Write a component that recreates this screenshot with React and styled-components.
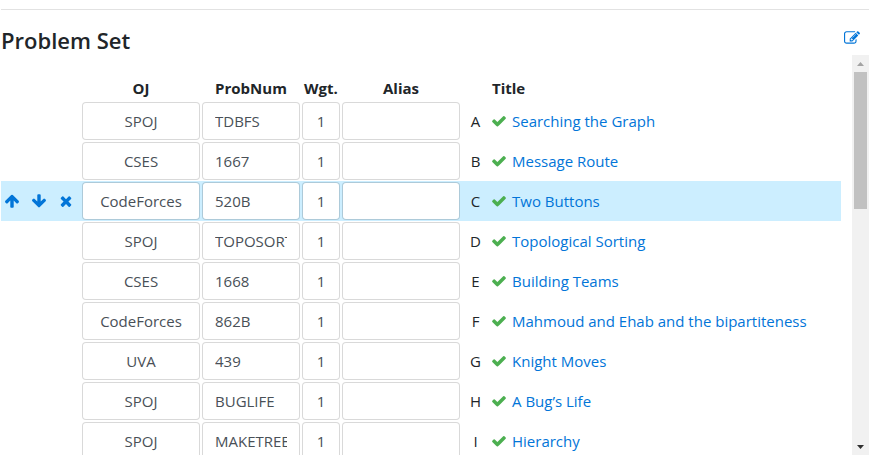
import React from "react";
import styled, { createGlobalStyle } from "styled-components";

const GlobalStyle = createGlobalStyle`
  *, *::before, *::after { box-sizing: border-box; }
  body {
    margin: 0;
    background: #fff;
    color: #212529;
    font: 15px/24px "Open Sans", "Noto Sans", sans-serif;
  }
`;

const Page = styled.main`
  padding: 9px 7px 13px 1px;
`;

const Divider = styled.hr`
  height: 1px;
  margin: 0;
  border: 0;
  background: #e2e2e2;
`;

const Header = styled.header`
  display: flex;
  align-items: center;
  justify-content: space-between;
  height: 45px;
  padding: 14px 9px 0 0;
`;

const Heading = styled.h2`
  margin: 0;
  font-size: 22px;
  font-weight: 600;
  line-height: 28px;
`;

const IconButton = styled.button`
  display: inline-flex;
  padding: 0;
  border: 0;
  background: none;
  color: #0275d8;
  cursor: pointer;
`;

const EditButton = styled(IconButton)`
  margin-bottom: 4px;
`;

const Svg = styled.svg`
  display: block;
  flex: none;
  width: 16px;
  height: 16px;
  fill: currentColor;
`;

const ScrollBox = styled.div`
  display: flex;
  max-height: 400px;
  overflow: hidden;
`;

const Viewport = styled.div`
  flex: 1;
  min-width: 0;
  padding: 13px 11px 0 0;
`;

const Table = styled.table`
  width: 100%;
  table-layout: fixed;
  border-collapse: collapse;
`;

const Col = styled.col`
  width: ${(p) => p.$width};
`;

const Th = styled.th`
  height: 33px;
  padding: 6px 0 0 ${(p) => (p.$align ? "2px" : "0")};
  text-align: ${(p) => p.$align || "center"};
  font-weight: 700;
  white-space: nowrap;
`;

const Row = styled.tr`
  background: ${(p) => (p.$active ? "#cceeff" : "transparent")};
`;

const Td = styled.td`
  height: 40px;
  padding: 1px;
  text-align: center;
`;

const TitleTd = styled(Td)`
  text-align: left;
`;

const Actions = styled.div`
  display: flex;
  align-items: center;
  gap: 11px;
  padding-left: 2px;
`;

const Control = styled.input`
  display: block;
  width: 100%;
  height: 38px;
  padding: 0 ${(p) => p.$pad || "12px"};
  border: 1px solid rgba(0, 0, 0, 0.15);
  border-radius: 4px;
  background: #fff;
  background-clip: padding-box;
  color: #495057;
  font: inherit;
  text-align: ${(p) => p.$align || "left"};
`;

const Judge = styled(Control)`
  appearance: none;
  text-align: center;
  text-align-last: center;
`;

const TitleCell = styled.div`
  display: flex;
  align-items: center;
  gap: 5px;
`;

const Solved = styled.span`
  color: #4caf50;
`;

const Link = styled.a`
  color: #0275d8;
  text-decoration: none;
  white-space: nowrap;
`;

const Scrollbar = styled.div`
  display: flex;
  flex: none;
  flex-direction: column;
  width: 17px;
  height: 400px;
  background: #f1f1f1;
`;

const Step = styled(IconButton)`
  align-items: center;
  justify-content: center;
  height: 17px;
  color: ${(p) => (p.$dim ? "#a3a3a3" : "#303030")};
`;

const Arrow = styled.svg`
  width: 7px;
  height: 4px;
  fill: currentColor;
`;

const Track = styled.div`
  flex: 1;
  padding: 0 2px;
`;

const Thumb = styled.div`
  height: 137px;
  background: #c1c1c1;
`;

const paths = {
  up: "M1675 971q0 51-37 90l-75 75q-38 38-91 38-54 0-90-38l-294-293v704q0 52-37.5 84.5t-90.5 32.5h-128q-53 0-90.5-32.5t-37.5-84.5v-704l-294 293q-36 38-90 38t-90-38l-75-75q-38-38-38-90 0-53 38-91l651-651q35-37 90-37 54 0 91 37l651 651q37 39 37 91z",
  down: "M1675 832q0 53-37 90l-651 652q-39 37-91 37-53 0-90-37l-651-652q-38-36-38-90 0-53 38-91l74-75q39-37 91-37 53 0 90 37l294 294v-704q0-52 38-90t90-38h128q52 0 90 38t38 90v704l294-294q37-37 90-37 52 0 91 37l75 75q37 39 37 91z",
  remove: "M1490 1322q0 40-28 68l-136 136q-28 28-68 28t-68-28l-294-294-294 294q-28 28-68 28t-68-28l-136-136q-28-28-28-68t28-68l294-294-294-294q-28-28-28-68t28-68l136-136q28-28 68-28t68 28l294 294 294-294q28-28 68-28t68 28l136 136q28 28 28 68t-28 68l-294 294 294 294q28 28 28 68z",
  check: "M1671 566q0 40-28 68l-724 724-136 136q-28 28-68 28t-68-28l-136-136-362-362q-28-28-28-68t28-68l136-136q28-28 68-28t68 28l294 295 656-657q28-28 68-28t68 28l136 136q28 28 28 68z",
  edit: "M888 1184l116-116-152-152-116 116v56h96v96h56zm440-720q-16-16-33 1l-350 350q-17 17-1 33t33-1l350-350q17-17 1-33zm80 594v190q0 119-84.5 203.5t-203.5 84.5h-832q-119 0-203.5-84.5t-84.5-203.5v-832q0-119 84.5-203.5t203.5-84.5h832q63 0 117 25 15 7 18 23 3 17-9 29l-49 49q-14 14-32 8-23-6-45-6h-832q-66 0-113 47t-47 113v832q0 66 47 113t113 47h832q66 0 113-47t47-113v-126q0-13 9-22l64-64q15-15 35-7t20 29zm-96-738l288 288-672 672h-288v-288zm444 132l-92 92-288-288 92-92q28-28 68-28t68 28l152 152q28 28 28 68t-28 68z",
};

const Icon = ({ name }) => (
  <Svg viewBox="0 0 1792 1792" aria-hidden="true">
    <path d={paths[name]} />
  </Svg>
);

const judges = ["CodeForces", "CSES", "SPOJ", "UVA"];

const problems = [
  { letter: "A", oj: "SPOJ", num: "TDBFS", title: "Searching the Graph" },
  { letter: "B", oj: "CSES", num: "1667", title: "Message Route" },
  { letter: "C", oj: "CodeForces", num: "520B", title: "Two Buttons", active: true },
  { letter: "D", oj: "SPOJ", num: "TOPOSORT", title: "Topological Sorting" },
  { letter: "E", oj: "CSES", num: "1668", title: "Building Teams" },
  { letter: "F", oj: "CodeForces", num: "862B", title: "Mahmoud and Ehab and the bipartiteness" },
  { letter: "G", oj: "UVA", num: "439", title: "Knight Moves" },
  { letter: "H", oj: "SPOJ", num: "BUGLIFE", title: "A Bug\u2019s Life" },
  { letter: "I", oj: "SPOJ", num: "MAKETREE", title: "Hierarchy" },
];

const ProblemRow = ({ problem }) => (
  <Row $active={problem.active}>
    <Td>
      {problem.active && (
        <Actions>
          <IconButton type="button" aria-label="Move up"><Icon name="up" /></IconButton>
          <IconButton type="button" aria-label="Move down"><Icon name="down" /></IconButton>
          <IconButton type="button" aria-label="Remove"><Icon name="remove" /></IconButton>
        </Actions>
      )}
    </Td>
    <Td>
      <Judge as="select" defaultValue={problem.oj} aria-label={`OJ of problem ${problem.letter}`}>
        {judges.map((judge) => <option key={judge}>{judge}</option>)}
      </Judge>
    </Td>
    <Td>
      <Control defaultValue={problem.num} aria-label={`Number of problem ${problem.letter}`} />
    </Td>
    <Td>
      <Control $align="center" $pad="4px" defaultValue="1" aria-label={`Weight of problem ${problem.letter}`} />
    </Td>
    <Td>
      <Control aria-label={`Alias of problem ${problem.letter}`} />
    </Td>
    <Td>{problem.letter}</Td>
    <TitleTd>
      <TitleCell>
        <Solved><Icon name="check" /></Solved>
        <Link href="#">{problem.title}</Link>
      </TitleCell>
    </TitleTd>
  </Row>
);

export default function App() {
  return (
    <>
      <GlobalStyle />
      <Page>
        <Divider />
        <Header>
          <Heading>Problem Set</Heading>
          <EditButton type="button" aria-label="Edit problem set"><Icon name="edit" /></EditButton>
        </Header>
        <ScrollBox>
          <Viewport>
            <Table>
              <colgroup>
                <Col $width="80px" />
                <Col $width="120px" />
                <Col $width="100px" />
                <Col $width="40px" />
                <Col $width="120px" />
                <Col $width="29px" />
                <Col $width="auto" />
              </colgroup>
              <thead>
                <tr>
                  <Th as="td" />
                  <Th scope="col">OJ</Th>
                  <Th scope="col">ProbNum</Th>
                  <Th scope="col">Wgt.</Th>
                  <Th scope="col">Alias</Th>
                  <Th as="td" />
                  <Th scope="col" $align="left">Title</Th>
                </tr>
              </thead>
              <tbody>
                {problems.map((problem) => <ProblemRow key={problem.letter} problem={problem} />)}
              </tbody>
            </Table>
          </Viewport>
          <Scrollbar>
            <Step type="button" $dim aria-label="Scroll up">
              <Arrow viewBox="0 0 7 4" aria-hidden="true"><path d="M0 4L3.5 0L7 4z" /></Arrow>
            </Step>
            <Track><Thumb /></Track>
            <Step type="button" aria-label="Scroll down">
              <Arrow viewBox="0 0 7 4" aria-hidden="true"><path d="M0 0L3.5 4L7 0z" /></Arrow>
            </Step>
          </Scrollbar>
        </ScrollBox>
      </Page>
    </>
  );
}
